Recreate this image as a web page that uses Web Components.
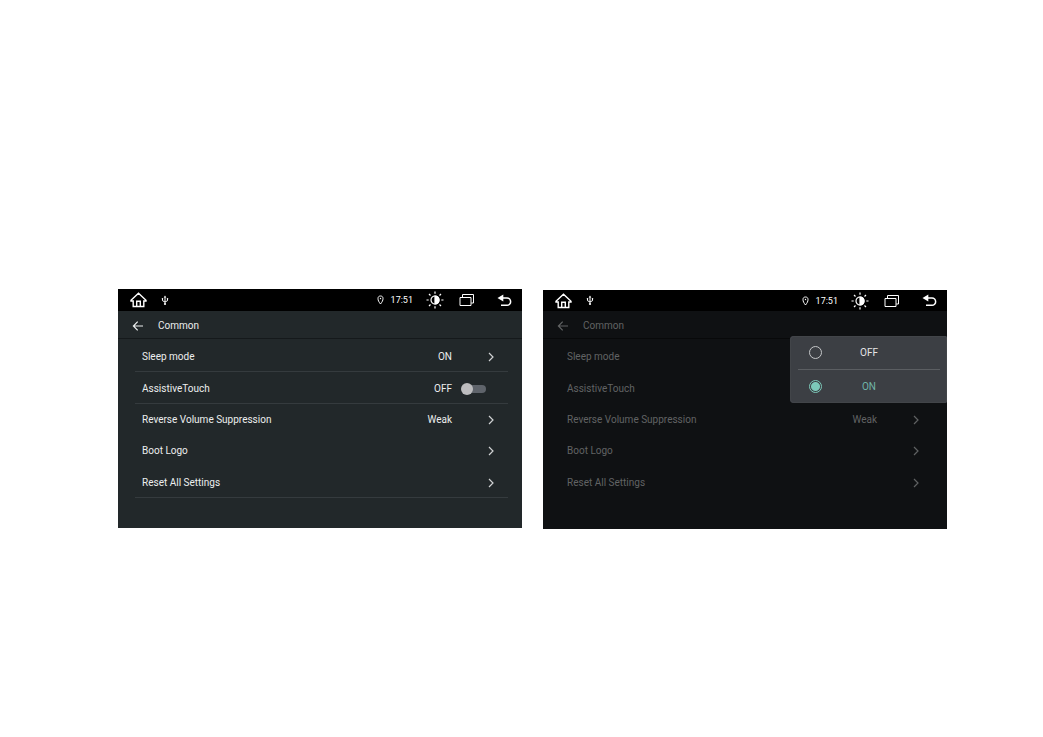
<!DOCTYPE html>
<html lang="en">
<head>
<meta charset="utf-8">
<meta name="viewport" content="width=device-width, initial-scale=1">
<title>Common settings</title>
<style>
body { margin: 0; background: #fff; font-family: Roboto, "Liberation Sans", sans-serif; }
</style>
</head>
<body>
<settings-page>
  <head-unit>
    <status-bar></status-bar>
    <screen-title>Common</screen-title>
    <settings-list>
      <settings-row value="ON" line>Sleep mode</settings-row>
      <settings-row value="OFF" kind="toggle" line>AssistiveTouch</settings-row>
      <settings-row value="Weak">Reverse Volume Suppression</settings-row>
      <settings-row>Boot Logo</settings-row>
      <settings-row line>Reset All Settings</settings-row>
    </settings-list>
  </head-unit>
  <head-unit dimmed>
    <status-bar></status-bar>
    <screen-title>Common</screen-title>
    <settings-list>
      <settings-row>Sleep mode</settings-row>
      <settings-row>AssistiveTouch</settings-row>
      <settings-row value="Weak">Reverse Volume Suppression</settings-row>
      <settings-row>Boot Logo</settings-row>
      <settings-row>Reset All Settings</settings-row>
    </settings-list>
    <choice-menu slot="menu" options="OFF,ON" selected="ON"></choice-menu>
  </head-unit>
</settings-page>

<script>
class BaseElement extends HTMLElement {
  connectedCallback() {
    if (this.shadowRoot) return;
    this.attachShadow({ mode: "open" }).innerHTML = `
      <style>
        :host, *, *::before, *::after { box-sizing: border-box; }
        button { all: unset; box-sizing: border-box; cursor: pointer; }
        svg { display: block; fill: none; }
        ${this.css()}
      </style>${this.html()}`;
  }
}

customElements.define("settings-page", class extends BaseElement {
  css() { return `
    :host { display: grid; grid-template-columns: 1fr 1fr; gap: 21px; align-items: start; padding: 289px 96px 0 118px; }
    ::slotted([dimmed]) { margin-top: 1px; }`; }
  html() { return `<slot></slot>`; }
});

customElements.define("head-unit", class extends BaseElement {
  css() { return `
    :host {
      display: block; position: relative; padding-bottom: 30px;
      --bar: 22px; --line: #353b3e; --edge: #15191b; --accessory: #d0d2d3;
      background: #22282a; color: #eceeee;
    }
    :host([dimmed]) {
      padding-bottom: 31px;
      --bar: 21px; --line: transparent; --edge: #08090a; --accessory: #606263;
      background: #0f1113; color: #616364;
    }`; }
  html() { return `<slot></slot><slot name="menu"></slot>`; }
});

customElements.define("status-bar", class extends BaseElement {
  css() { return `
    :host { display: flex; align-items: center; height: var(--bar); padding: 0 10px 0 12px; background: #000; color: #fff; }
    svg { stroke: currentColor; }
    .usb { margin-left: 14px; }
    .right { display: flex; align-items: center; margin-left: auto; }
    time { margin: 0 13px 0 7px; font-size: 9px; line-height: 12px; }
    .light { margin-right: 15px; }
    .recent { margin-right: 22px; }`; }
  html() { return `
    <button aria-label="Home"><svg width="17" height="16" viewBox="0 0 17 16" stroke-width="1.4"><path d="M1 8.2 8.5 1.3 16 8.2V9h-2.2v5.5H3.2V9H1zM6.7 14.3V9.2h3.6v5.1"/></svg></button>
    <svg class="usb" width="8" height="11" viewBox="0 0 8 11" stroke-width="1"><path d="M4 2v6.5M1.5 3.5v2.2L4 7l2.5-1.3V3.5"/><path d="m4 .5 1.3 2H2.7z" fill="currentColor" stroke="none"/><circle cx="4" cy="9" r="1.1" fill="currentColor" stroke="none"/><path d="M.8 3.7h1.4M5.8 3.7h1.4"/></svg>
    <div class="right">
      <svg width="7" height="10" viewBox="0 0 7 10" stroke-width="1"><path d="M3.5 9C1.8 6.8 1 5.5 1 3.5 1 1.8 2 1 3.5 1S6 1.8 6 3.5C6 5.5 5.2 6.8 3.5 9z"/><circle cx="3.5" cy="3.5" r=".7" fill="currentColor" stroke="none"/></svg>
      <time>17:51</time>
      <button class="light" aria-label="Brightness"><svg width="18" height="18" viewBox="0 0 18 18" stroke-width="1.2"><circle cx="9" cy="9" r="4"/><path d="M9 5a4 4 0 0 1 0 8z" fill="currentColor"/><path d="M9 .5v2.2M9 15.3v2.2M.5 9h2.2M15.3 9h2.2M3 3l1.5 1.5M13.5 13.5 15 15M15 3l-1.5 1.5M4.5 13.5 3 15"/></svg></button>
      <button class="recent" aria-label="Recent apps"><svg width="16" height="14" viewBox="0 0 16 14" stroke-width="1"><path d="M1 4.5h11v8H1zM3.5 4.3V1.5h11v8.5h-2.3"/></svg></button>
      <button aria-label="Back"><svg width="15" height="13" viewBox="0 0 15 13" stroke-width="1.5"><path d="M5 4h5a3.6 3.6 0 0 1 0 7.3H4"/><path d="M6.3.5v7L.5 4z" fill="currentColor" stroke="none"/></svg></button>
    </div>`; }
});

customElements.define("screen-title", class extends BaseElement {
  css() { return `
    :host { display: flex; align-items: center; gap: 14px; height: 28px; padding: 2px 0 0 14px; border-bottom: 1px solid var(--edge); }
    h1 { margin: 0; font-size: 10px; line-height: 16px; font-weight: 400; }
    svg { stroke: currentColor; }`; }
  html() { return `
    <button aria-label="Go back"><svg width="12" height="12" viewBox="0 0 12 12" stroke-width="1.2"><path d="M11 6H1.5M5.7 1.7 1.4 6l4.3 4.3"/></svg></button>
    <h1><slot></slot></h1>`; }
});

customElements.define("settings-list", class extends BaseElement {
  css() { return `:host { display: grid; grid-auto-rows: 1fr; height: 157px; margin: 2px 14px 0 17px; }`; }
  html() { return `<slot></slot>`; }
});

customElements.define("settings-row", class extends BaseElement {
  css() { return `
    :host { display: block; border-bottom: 1px solid transparent; }
    :host([line]) { border-bottom-color: var(--line); }
    .row { display: grid; grid-template-columns: 1fr auto 56px; align-items: center; width: 100%; height: 100%; padding: 2px 0 0 7px; font-size: 10px; line-height: 16px; cursor: pointer; }
    svg { margin-left: 35px; stroke: var(--accessory); }
    input { appearance: none; position: relative; width: 25px; height: 12px; margin: 0 0 0 9px; cursor: pointer; }
    input::before { content: ""; position: absolute; inset: 2px 0 2px 4px; border-radius: 4px; background: #5f646b; }
    input::after { content: ""; position: absolute; left: 0; top: 0; width: 12px; height: 12px; border-radius: 50%; background: #bdbdbf; }
    input:checked::after { left: 13px; }`; }
  html() {
    const toggle = this.getAttribute("kind") === "toggle";
    const tag = toggle ? "label" : "button";
    const accessory = toggle ? `<input type="checkbox" role="switch">`
      : `<svg width="8" height="10" viewBox="0 0 8 10" stroke-width="1.2"><path d="m2 1 4 4-4 4"/></svg>`;
    return `<${tag} class="row"><span><slot></slot></span><span>${this.getAttribute("value") || ""}</span>${accessory}</${tag}>`;
  }
});

customElements.define("choice-menu", class extends BaseElement {
  css() { return `
    :host { position: absolute; top: 46px; right: 0; width: 157px; padding: 0 7px 0 8px; border-radius: 4px 2px 2px 4px; background: #3c3f44; color: #e4e5e6; box-shadow: inset 0 0 1px 1px #43464b; }
    label { display: grid; grid-template-columns: 1fr auto 1fr; align-items: center; height: 33px; font-size: 10px; line-height: 16px; cursor: pointer; }
    label + label { height: 34px; border-top: 1px solid #5b5e62; }
    input { appearance: none; width: 13px; height: 13px; margin: 0 0 0 11px; border: 1px solid #c5c7c9; border-radius: 50%; cursor: pointer; }
    input:checked { border-color: #7cc9b9; background: radial-gradient(circle, #7cc9b9 4px, transparent 5px); }
    label:has(:checked) { color: #70b5a8; }`; }
  html() {
    const selected = this.getAttribute("selected");
    return this.getAttribute("options").split(",").map(name =>
      `<label><input type="radio" name="sleep"${name === selected ? " checked" : ""}><span>${name}</span></label>`).join("");
  }
});
</script>
</body>
</html>
